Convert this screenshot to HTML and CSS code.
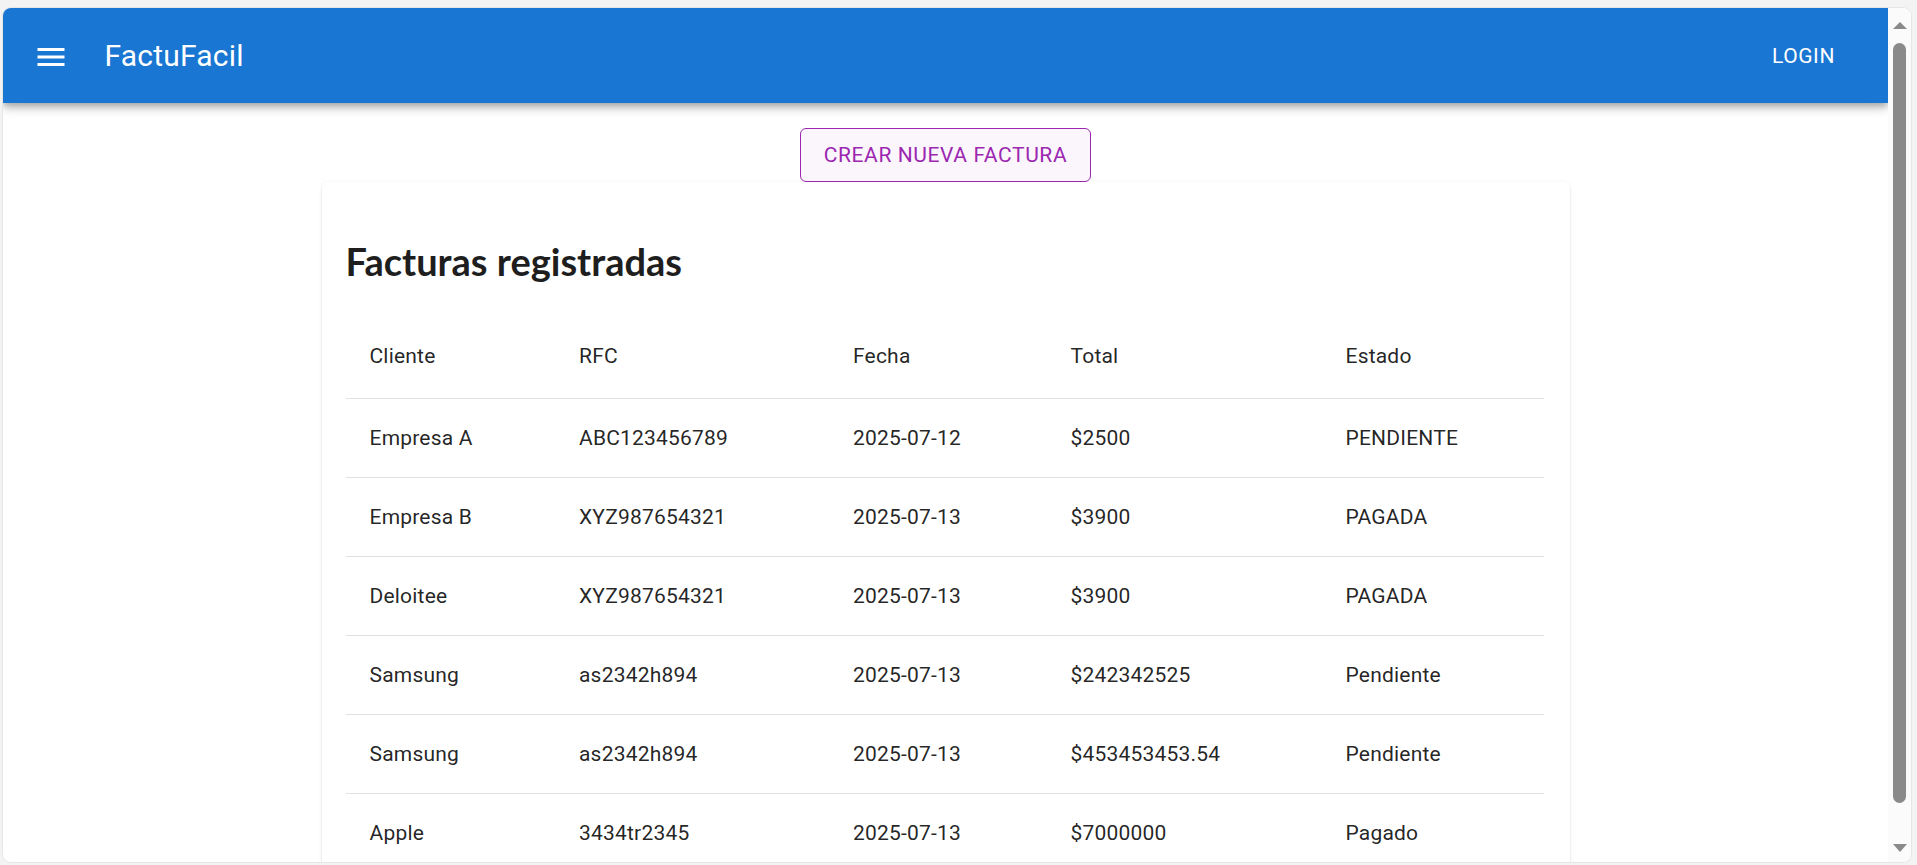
FILE: index.html
```html
<!DOCTYPE html>
<html lang="es">
<head>
<meta charset="utf-8">
<title>FactuFacil</title>
<link rel="stylesheet" href="styles.css">
</head>
<body>
<div class="window">
  <div class="viewport">
    <header class="appbar">
      <svg class="menu-icon" viewBox="0 0 24 24" aria-hidden="true"><path d="M3 18h18v-2H3zm0-5h18v-2H3zm0-7v2h18V6z"/></svg>
      <span class="brand">FactuFacil</span>
      <span class="login">Login</span>
    </header>
    <main class="main">
      <button class="btn-outline" type="button">Crear nueva factura</button>
      <section class="card">
        <h2 class="card-title">Facturas registradas</h2>
        <table class="tbl">
          <thead>
            <tr>
              <th class="c1">Cliente</th>
              <th class="c2">RFC</th>
              <th class="c3">Fecha</th>
              <th class="c4">Total</th>
              <th class="c5">Estado</th>
            </tr>
          </thead>
          <tbody>
            <tr><td>Empresa A</td><td>ABC123456789</td><td>2025-07-12</td><td>$2500</td><td>PENDIENTE</td></tr>
            <tr><td>Empresa B</td><td>XYZ987654321</td><td>2025-07-13</td><td>$3900</td><td>PAGADA</td></tr>
            <tr><td>Deloitee</td><td>XYZ987654321</td><td>2025-07-13</td><td>$3900</td><td>PAGADA</td></tr>
            <tr><td>Samsung</td><td>as2342h894</td><td>2025-07-13</td><td>$242342525</td><td>Pendiente</td></tr>
            <tr><td>Samsung</td><td>as2342h894</td><td>2025-07-13</td><td>$453453453.54</td><td>Pendiente</td></tr>
            <tr><td>Apple</td><td>3434tr2345</td><td>2025-07-13</td><td>$7000000</td><td>Pagado</td></tr>
          </tbody>
        </table>
      </section>
    </main>
  </div>
  <div class="scrollbar">
    <span class="arrow-up"></span>
    <span class="thumb"></span>
    <span class="arrow-down"></span>
  </div>
</div>
</body>
</html>
```

FILE: styles.css
```css
* { box-sizing: border-box; }

html, body {
  margin: 0;
  height: 100%;
}

body {
  background: #f3f3f3;
  font-family: Roboto, "Liberation Sans", Arial, sans-serif;
  overflow: hidden;
}

.window {
  margin: 8px 6px 0 3px;
  height: 854px;
  display: flex;
  background: #ffffff;
  border-radius: 8px;
  overflow: hidden;
  box-shadow: 0 0 0 1px #e6e6e6;
}

.viewport {
  flex: 1;
  min-width: 0;
  overflow: hidden;
  background: #ffffff;
}

.appbar {
  height: 95px;
  background: #1976d2;
  color: #ffffff;
  display: flex;
  align-items: center;
  padding: 0 53px 0 29.5px;
  box-shadow: 0 3px 6px -1px rgba(0,0,0,0.2), 0 6px 8px 0 rgba(0,0,0,0.14), 0 1.5px 15px 0 rgba(0,0,0,0.12);
  position: relative;
  z-index: 2;
}

.menu-icon {
  width: 36px;
  height: 36px;
  fill: #ffffff;
  flex: none;
  margin-top: 2px;
}

.brand {
  margin-left: 36px;
  font-size: 30px;
  font-weight: 400;
  letter-spacing: 0.2px;
  line-height: 1.172;
  flex: 1;
}

.login {
  font-size: 21px;
  font-weight: 400;
  line-height: 1.75;
  letter-spacing: 0.6px;
  text-transform: uppercase;
  margin-top: 2px;
}

.main {
  display: flex;
  flex-direction: column;
  align-items: center;
  padding-top: 25px;
}

.btn-outline {
  font-family: Roboto, "Liberation Sans", Arial, sans-serif;
  font-size: 21px;
  font-weight: 400;
  letter-spacing: 0.6px;
  line-height: 36px;
  text-transform: uppercase;
  color: #9c27b0;
  background: #fbf6fc;
  border: 1px solid #9c27b0;
  border-radius: 6px;
  padding: 8px 23px;
  margin: 0;
  cursor: pointer;
}

.card {
  width: 1248px;
  background: #ffffff;
  border-radius: 6px;
  padding: 24px;
  box-shadow: 0 2px 1.5px -1.5px rgba(0,0,0,0.2), 0 1.5px 1.5px 0 rgba(0,0,0,0.1), 0 1.5px 4px 0 rgba(0,0,0,0.08);
}

.card-title {
  margin: 32px 0 30px;
  font-family: Lato, "Open Sans", sans-serif;
  font-weight: 700;
  font-size: 38px;
  line-height: 46px;
  color: #1e1e1e;
}

.tbl {
  width: 1198px;
  border-collapse: collapse;
  table-layout: fixed;
  color: rgba(0,0,0,0.87);
  font-size: 21px;
}

.tbl th,
.tbl td {
  text-align: left;
  padding: 24px;
  border-bottom: 1px solid #e0e0e0;
  font-weight: 400;
  letter-spacing: 0.2px;
}

.tbl th {
  line-height: 36px;
}

.tbl td {
  line-height: 30px;
}

.c1 { width: 209.5px; }
.c2 { width: 274px; }
.c3 { width: 217.5px; }
.c4 { width: 275px; }
.c5 { width: 222px; }

.scrollbar {
  width: 23px;
  flex: none;
  background: #fbfbfb;
  display: flex;
  flex-direction: column;
  align-items: center;
  padding-top: 14px;
}

.arrow-up {
  width: 0;
  height: 0;
  border-left: 7.5px solid transparent;
  border-right: 7.5px solid transparent;
  border-bottom: 7px solid #8a8a8a;
}

.thumb {
  width: 13px;
  height: 760px;
  margin-top: 14px;
  background: #8a8a8a;
  border-radius: 7px;
}

.arrow-down {
  margin-top: 41px;
  width: 0;
  height: 0;
  border-left: 7.5px solid transparent;
  border-right: 7.5px solid transparent;
  border-top: 8px solid #8a8a8a;
}
```
